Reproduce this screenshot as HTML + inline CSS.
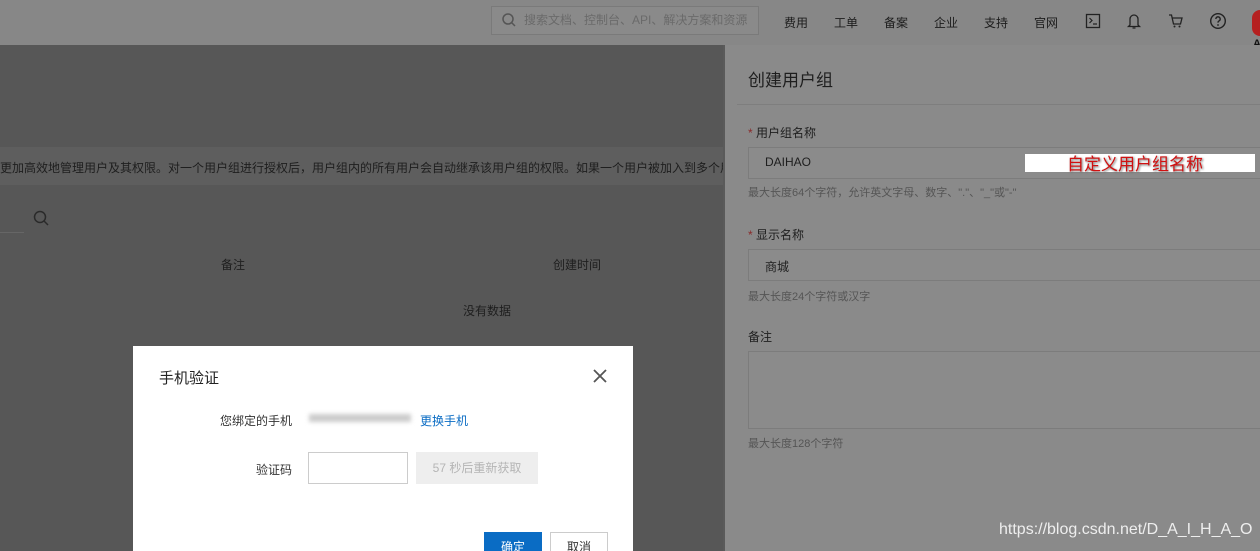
<!DOCTYPE html>
<html style="width:1260px;height:551px;overflow:hidden"><head><meta charset="utf-8"><style>
*{margin:0;padding:0;box-sizing:border-box}
body{width:1260px;height:551px;overflow:hidden;position:relative;background:#575757;font-family:"Liberation Sans","Noto Sans CJK SC",sans-serif;font-size:12px;color:#222}
.a{position:absolute}
.top{left:0;top:0;width:1260px;height:45px;background:#878787}
.search{left:491px;top:6px;width:268px;height:29px;border:1px solid #7a7a7a;background:#8a8a8a;color:#6a6a6a;font-size:12px;line-height:27px;padding-left:32px}
.nav{top:14px;font-size:12px;color:#1c1c1c}
.panel{left:723px;top:45px;width:537px;height:506px;background:#8a8a8a;border-left:2px solid #5a5a5a}
.inp{border:1px solid #7c7c7c;background:#8b8b8b}
.lbl{font-size:12px;color:#1e1e1e}
.hint{font-size:11px;color:#555}
.dlg{left:133px;top:346px;width:500px;height:205px;background:#fff}
</style></head><body>
<div class="a top"></div>
<div class="a search">搜索文档、控制台、API、解决方案和资源</div>
<svg class="a" style="left:501px;top:12px" width="16" height="16" viewBox="0 0 16 16"><circle cx="7" cy="7" r="5" fill="none" stroke="#555" stroke-width="1.5"/><path d="M10.5 10.5L14 14" stroke="#555" stroke-width="1.5"/></svg>
<div class="a nav" style="left:784px">费用</div>
<div class="a nav" style="left:834px">工单</div>
<div class="a nav" style="left:884px">备案</div>
<div class="a nav" style="left:934px">企业</div>
<div class="a nav" style="left:984px">支持</div>
<div class="a nav" style="left:1034px">官网</div>
<svg class="a" style="left:1085px;top:13px" width="16" height="16" viewBox="0 0 16 16"><rect x="1.5" y="1.5" width="13" height="13" fill="none" stroke="#222" stroke-width="1.3"/><path d="M4.5 5l2.5 2.5-2.5 2.5M8 11h4" fill="none" stroke="#222" stroke-width="1.2"/></svg>
<svg class="a" style="left:1126px;top:12px" width="16" height="18" viewBox="0 0 16 18"><path d="M4 13V7a4 4 0 018 0v6l1.5 1.5h-11z M6.5 16h3" fill="none" stroke="#222" stroke-width="1.3"/></svg>
<svg class="a" style="left:1168px;top:13px" width="16" height="16" viewBox="0 0 16 16"><path d="M1 2h2.5l2 9h7l1.5-6H4.5" fill="none" stroke="#222" stroke-width="1.3"/><circle cx="6.5" cy="13.5" r="1" fill="#222"/><circle cx="11.5" cy="13.5" r="1" fill="#222"/></svg>
<svg class="a" style="left:1209px;top:12px" width="18" height="18" viewBox="0 0 18 18"><circle cx="9" cy="9" r="7.3" fill="none" stroke="#222" stroke-width="1.4"/><path d="M6.8 7a2.2 2.2 0 114 1.3c-.9.7-1.8 1-1.8 2.3" fill="none" stroke="#222" stroke-width="1.4"/><circle cx="9" cy="13" r=".9" fill="#222"/></svg>
<div class="a" style="left:1252px;top:10px;width:16px;height:26px;background:#b52020;border-radius:8px"></div>
<div class="a" style="left:1253px;top:38px;font-size:11px;font-weight:bold;color:#111">A</div>

<div class="a" style="left:0;top:147px;width:723px;height:38px;background:#5e5e5e"></div>
<div class="a" style="left:0;top:159px;width:723px;font-size:12px;color:#1e1e1e;white-space:nowrap;overflow:hidden">更加高效地管理用户及其权限。对一个用户组进行授权后，用户组内的所有用户会自动继承该用户组的权限。如果一个用户被加入到多个用</div>
<div class="a" style="left:0;top:232px;width:24px;height:1px;background:#666"></div>
<svg class="a" style="left:32px;top:209px" width="18" height="18" viewBox="0 0 18 18"><circle cx="8" cy="8" r="5.5" fill="none" stroke="#2a2a2a" stroke-width="1.5"/><path d="M12 12l4 4" stroke="#2a2a2a" stroke-width="1.5"/></svg>
<div class="a" style="left:221px;top:256px;color:#1e1e1e">备注</div>
<div class="a" style="left:553px;top:256px;color:#1e1e1e">创建时间</div>
<div class="a" style="left:463px;top:302px;color:#1e1e1e">没有数据</div>

<div class="a panel"></div>
<div class="a" style="left:748px;top:66px;font-size:17px;color:#1e1e1e">创建用户组</div>
<div class="a" style="left:737px;top:104px;width:523px;height:1px;background:#7e7e7e"></div>
<div class="a lbl" style="left:748px;top:124px"><span style="color:#8a2a2a">*</span> 用户组名称</div>
<div class="a inp" style="left:748px;top:147px;width:520px;height:32px"></div>
<div class="a" style="left:765px;top:155px;font-size:12px;color:#1e1e1e">DAIHAO</div>
<div class="a" style="left:1025px;top:154px;width:230px;height:18px;background:#fff"></div>
<div class="a" style="left:1067px;top:150px;font-size:17px;color:#d01010;text-shadow:1px 1px 2px #666">自定义用户组名称</div>
<div class="a hint" style="left:748px;top:184px">最大长度64个字符，允许英文字母、数字、"."、"_"或"-"</div>
<div class="a lbl" style="left:748px;top:226px"><span style="color:#8a2a2a">*</span> 显示名称</div>
<div class="a inp" style="left:748px;top:249px;width:520px;height:32px"></div>
<div class="a" style="left:765px;top:258px;font-size:12px;color:#1e1e1e">商城</div>
<div class="a hint" style="left:748px;top:288px">最大长度24个字符或汉字</div>
<div class="a lbl" style="left:748px;top:328px">备注</div>
<div class="a inp" style="left:748px;top:351px;width:520px;height:78px"></div>
<div class="a hint" style="left:748px;top:435px">最大长度128个字符</div>
<div class="a" style="left:999px;top:521px;font-size:16px;color:#eee">https://blog.csdn.net/D_A_I_H_A_O</div>

<div class="a dlg"></div>
<div class="a" style="left:159px;top:367px;font-size:15px;color:#222">手机验证</div>
<svg class="a" style="left:592px;top:368px" width="16" height="16" viewBox="0 0 16 16"><path d="M2 2l12 12M14 2L2 14" stroke="#555" stroke-width="1.8"/></svg>
<div class="a" style="left:220px;top:412px;color:#333">您绑定的手机</div>
<div class="a" style="left:309px;top:414px;width:102px;height:8px;background:#ccc;filter:blur(2px)"></div>
<div class="a" style="left:420px;top:412px;color:#0a6cc4">更换手机</div>
<div class="a" style="left:256px;top:461px;color:#333">验证码</div>
<div class="a" style="left:308px;top:452px;width:100px;height:32px;border:1px solid #ccc"></div>
<div class="a" style="left:416px;top:452px;width:122px;height:32px;background:#eee;color:#b5b5b5;line-height:32px;text-align:center">57 秒后重新获取</div>
<div class="a" style="left:484px;top:532px;width:58px;height:19px;overflow:hidden;background:#0a6cc4;color:#fff;text-align:center;line-height:30px">确定</div>
<div class="a" style="left:550px;top:532px;width:58px;height:19px;overflow:hidden;border:1px solid #ccc;border-bottom:none;background:#fff;color:#333;text-align:center;line-height:28px">取消</div>
</body></html>
